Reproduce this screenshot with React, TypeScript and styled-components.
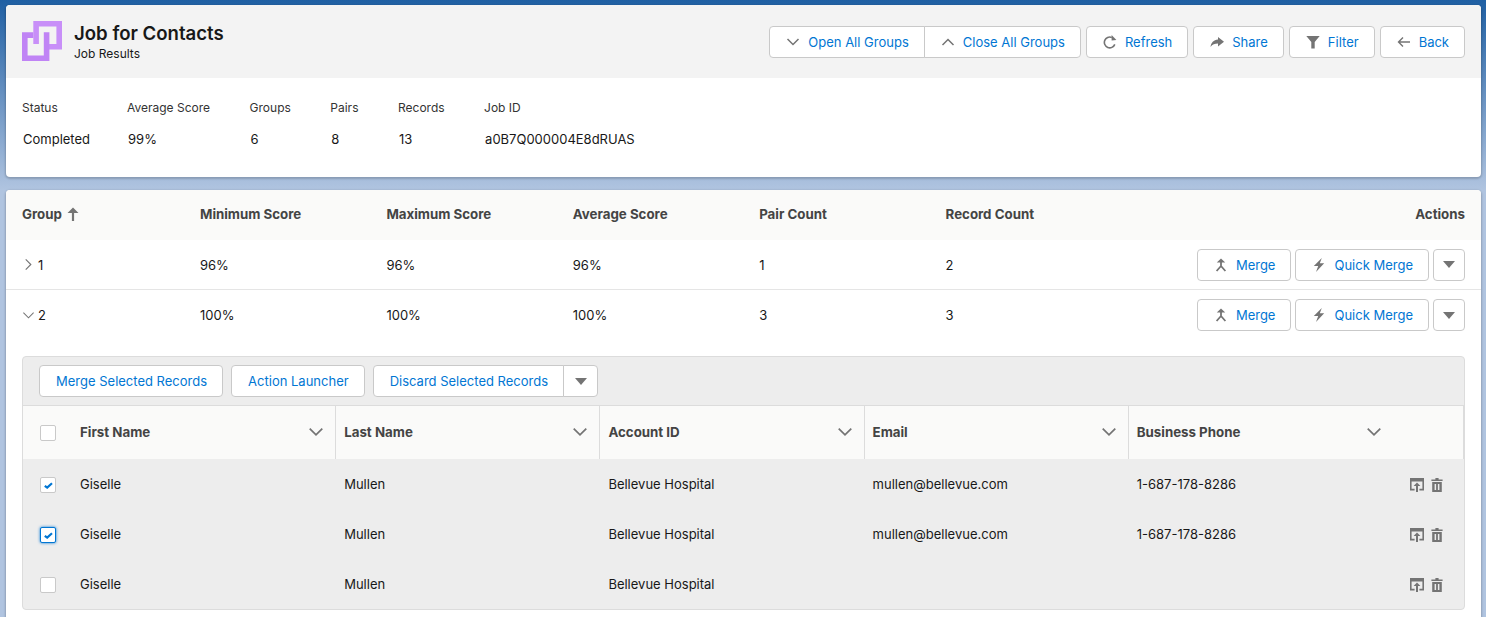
import React from 'react';
import styled, { createGlobalStyle } from 'styled-components';

const GlobalStyle = createGlobalStyle`
  html, body {
    margin: 0;
    height: 100%;
    overflow: hidden;
  }
  body {
    background: linear-gradient(#1f5fa3 0, #b0c4e0 190px);
    font-family: Inter, "Open Sans", sans-serif;
    font-size: 13px;
    color: #181818;
  }
  * {
    box-sizing: border-box;
  }
`;

const Page = styled.div`
  height: 617px;
  padding: 5px 5px 0 6px;
  display: flex;
  flex-direction: column;
  gap: 13px;
  overflow: hidden;
`;

const Card = styled.section`
  background: #fff;
  border-radius: 4px;
  box-shadow: 0 1px 2px 1px rgba(0, 0, 0, 0.18);
  overflow: hidden;
`;

const ResultsCard = styled(Card)`
  flex: 1;
  border-radius: 4px 4px 0 0;
`;

const Header = styled.header`
  height: 73px;
  background: #f3f3f3;
  padding: 16px;
  display: flex;
  align-items: flex-start;
  justify-content: space-between;
`;

const TitleBlock = styled.div`
  display: flex;
  gap: 12px;
`;

const Titles = styled.div`
  display: flex;
  flex-direction: column;
  gap: 1px;
  padding-top: 1px;
`;

const Title = styled.h1`
  margin: 0;
  font-size: 18.6px;
  line-height: 23px;
  font-weight: 600;
`;

const Subtitle = styled.div`
  font-size: 12px;
  line-height: 16px;
`;

const Actions = styled.div`
  display: flex;
  gap: 5px;
  margin-top: 5px;
`;

const Button = styled.button`
  height: 32px;
  padding: 0 15px 0 16px;
  display: inline-flex;
  align-items: center;
  justify-content: center;
  gap: 8px;
  background: #fff;
  border: 1px solid #c9c9c9;
  border-radius: 4px;
  color: #0176d3;
  font-family: inherit;
  font-size: 13px;
  white-space: nowrap;
`;

const ButtonGroup = styled.div`
  display: flex;

  ${Button} {
    border-radius: 0;
    margin-left: -1px;
  }
  ${Button}:first-child {
    border-radius: 4px 0 0 4px;
    margin-left: 0;
  }
  ${Button}:last-child {
    border-radius: 0 4px 4px 0;
  }
`;

const MenuButton = styled(Button)`
  width: 32px;
  padding: 0;
`;

const GroupMenuButton = styled(MenuButton)`
  width: 35px;
`;

const Summary = styled.div`
  height: 99px;
  padding: 22px 16px 0;
  display: flex;
  gap: 39.5px;
`;

const SummaryItem = styled.div`
  display: flex;
  flex-direction: column;
  gap: 15px;

  &:first-child {
    margin-right: -2.5px;
  }
`;

const SummaryLabel = styled.div`
  font-size: 12px;
  line-height: 16px;
  color: #333;
`;

const SummaryValue = styled.div`
  padding-left: 1px;
  line-height: 16px;
`;

const GroupGrid = styled.div`
  display: grid;
  grid-template-columns: 178px repeat(5, 186.4px) 1fr;
  align-items: center;
  padding: 0 16px;
  height: 50px;
`;

const GroupHead = styled(GroupGrid)`
  background: #fafaf9;
  padding-bottom: 2px;
  font-size: 13.3px;
  font-weight: 700;
  color: #444;
`;

const GroupRow = styled(GroupGrid)<{ $divider?: boolean }>`
  border-bottom: ${(p) => (p.$divider ? '1px solid #e5e5e5' : 'none')};
`;

const GroupName = styled.div`
  display: flex;
  align-items: center;
  gap: 3px;
`;

const SortName = styled(GroupName)`
  gap: 5px;
`;

const RowActions = styled.div`
  display: flex;
  justify-content: flex-end;
  gap: 4px;
`;

const RightCell = styled.div`
  text-align: right;
`;

const Nested = styled.div`
  margin: 16px 16px 0;
  height: 254px;
  background: #ededed;
  border: 1px solid #dcdcdc;
  border-radius: 4px;
  overflow: hidden;
`;

const Toolbar = styled.div`
  height: 49px;
  padding: 8px 16px;
  display: flex;
  gap: 8px;
  border-bottom: 1px solid #dcdcdc;
`;

const RecordGrid = styled.div`
  display: grid;
  grid-template-columns: 49px repeat(5, 264.2px) 1fr;
  align-items: center;
`;

const RecordHead = styled(RecordGrid)`
  height: 53px;
  background: #fafaf9;
  border-right: 1px solid #dcdcdc;
  font-size: 13.3px;
  font-weight: 700;
  color: #444;
`;

const HeadCell = styled.div<{ $divider?: boolean }>`
  height: 100%;
  padding: 0 11px 2px 8px;
  display: flex;
  align-items: center;
  justify-content: space-between;
  border-right: ${(p) => (p.$divider ? '1px solid #dcdcdc' : 'none')};
`;

const RecordRow = styled(RecordGrid)`
  height: 50px;
`;

const Cell = styled.div`
  padding: 0 8px;
  white-space: nowrap;
`;

const CheckCell = styled.div`
  display: flex;
  padding-left: 17px;
`;

const RowCheckCell = styled(CheckCell)`
  padding-top: 2px;
`;

const Checkbox = styled.span<{ $focus?: boolean }>`
  width: 16px;
  height: 16px;
  display: flex;
  align-items: center;
  justify-content: center;
  background: #fff;
  border: 1px solid ${(p) => (p.$focus ? '#0176d3' : '#c9c9c9')};
  border-radius: 2px;
  box-shadow: ${(p) => (p.$focus ? '0 0 3px #0176d3' : 'none')};
`;

const RowIcons = styled.div`
  display: flex;
  justify-content: flex-end;
  align-items: center;
  gap: 7px;
  padding: 2px 21px 0 0;
`;

const Svg = styled.svg`
  display: block;
  flex: none;
`;

const GREY = '#747474';

const ChevronDown = ({ size = 14, sw = 1.5 }: { size?: number; sw?: number }) => (
  <Svg width={size} height={size} viewBox="0 0 14 14" fill="none" stroke={GREY} strokeWidth={sw}>
    <path d="M1.5 4l5.5 5.5L12.5 4" />
  </Svg>
);

const ChevronUp = () => (
  <Svg width={14} height={14} viewBox="0 0 14 14" fill="none" stroke={GREY} strokeWidth={1.5}>
    <path d="M1.5 10L7 4.5 12.5 10" />
  </Svg>
);

const ChevronRight = () => (
  <Svg width={13} height={13} viewBox="0 0 14 14" fill="none" stroke={GREY} strokeWidth={1.2}>
    <path d="M4 1.5L9.5 7 4 12.5" />
  </Svg>
);

const RefreshIcon = () => (
  <Svg width={14} height={14} viewBox="0 0 14 14" fill="none" stroke={GREY} strokeWidth={1.6}>
    <path d="M11.8 9.4A5.4 5.4 0 1 1 8.8 2.4" />
    <path d="M8.6 0v5.4l4.8-.4z" fill={GREY} stroke="none" />
  </Svg>
);

const ShareIcon = () => (
  <Svg width={14} height={14} viewBox="0 0 14 14" fill={GREY}>
    <path d="M8 2l6 4.7L8 11.4V8.6C4.8 8.6 2.4 9.6.5 12 1 8 3.6 5 8 4.6z" />
  </Svg>
);

const FilterIcon = () => (
  <Svg width={14} height={14} viewBox="0 0 14 14" fill={GREY}>
    <path d="M.3 1h13.4L8.7 7v6.4H5.3V7z" />
  </Svg>
);

const BackIcon = () => (
  <Svg width={14} height={14} viewBox="0 0 14 14" fill="none" stroke={GREY} strokeWidth={1.4}>
    <path d="M13 7H1.5M6 2.5L1.5 7 6 11.5" />
  </Svg>
);

const MergeIcon = () => (
  <Svg width={14} height={14} viewBox="0 0 14 14" fill="none" stroke={GREY} strokeWidth={1.8}>
    <path d="M7 3v5M2.6 13L7 8l4.4 5" />
    <path d="M2.8 4.6L7 .6l4.2 4z" fill={GREY} stroke="none" />
  </Svg>
);

const BoltIcon = () => (
  <Svg width={14} height={14} viewBox="0 0 14 14" fill={GREY}>
    <path d="M9.8 0L1.8 8h4.4L4 14l8.2-8.8H7.8z" />
  </Svg>
);

const CaretDown = () => (
  <Svg width={12} height={7} viewBox="0 0 12 7" fill={GREY}>
    <path d="M0 0h12L6 7z" />
  </Svg>
);

const SortUp = () => (
  <Svg width={12} height={14} viewBox="0 0 12 14" fill={GREY}>
    <path d="M6 .5L11.5 6H7.1v8H4.9V6H.5z" />
  </Svg>
);

const CheckMark = () => (
  <Svg width={9} height={7} viewBox="0 0 9 7" fill="none" stroke="#0176d3" strokeWidth={2.2}>
    <path d="M.8 3.8L3.2 5.6 8 1.2" />
  </Svg>
);

const OpenRecordIcon = () => (
  <Svg width={14} height={14} viewBox="0 0 14 14" fill={GREY}>
    <path d="M0 0h14v12.4H9.4v-1.6h3V3.4H1.6v7.4h3v1.6H0z" />
    <path d="M7 4.4l3.4 3.6H8v6H6V8H3.6z" />
  </Svg>
);

const TrashIcon = () => (
  <Svg width={12} height={14} viewBox="0 0 12 14" fill={GREY}>
    <path d="M4.4 0h3.2v1.4h4V3H.4V1.4h4zM1.2 4h9.6v10H1.2zM3.6 6v6h1.5V6zM6.9 6v6h1.5V6z" />
  </Svg>
);

const Logo = () => (
  <Svg width={40} height={40} viewBox="0 0 40 40" fill="none" strokeWidth={5.6}>
    <path d="M14.1 23V2.8h23.1v23H26" stroke="#c88ff8" />
    <path d="M11.3 14.1H2.8v23.1h21.8V11.3" stroke="#c084f5" />
  </Svg>
);

const summary = [
  ['Status', 'Completed'],
  ['Average Score', '99%'],
  ['Groups', '6'],
  ['Pairs', '8'],
  ['Records', '13'],
  ['Job ID', 'a0B7Q000004E8dRUAS'],
];

const groups = [
  { id: '1', open: false, min: '96%', max: '96%', avg: '96%', pairs: '1', records: '2' },
  { id: '2', open: true, min: '100%', max: '100%', avg: '100%', pairs: '3', records: '3' },
];

const columns = ['First Name', 'Last Name', 'Account ID', 'Email', 'Business Phone'];

const records = [
  { checked: true, focus: false, email: 'mullen@bellevue.com', phone: '1-687-178-8286' },
  { checked: true, focus: true, email: 'mullen@bellevue.com', phone: '1-687-178-8286' },
  { checked: false, focus: false, email: '', phone: '' },
];

const App: React.FC = () => (
  <>
    <GlobalStyle />
    <Page>
      <Card>
        <Header>
          <TitleBlock>
            <Logo />
            <Titles>
              <Title>Job for Contacts</Title>
              <Subtitle>Job Results</Subtitle>
            </Titles>
          </TitleBlock>
          <Actions>
            <ButtonGroup>
              <Button><ChevronDown />Open All Groups</Button>
              <Button><ChevronUp />Close All Groups</Button>
            </ButtonGroup>
            <Button><RefreshIcon />Refresh</Button>
            <Button><ShareIcon />Share</Button>
            <Button><FilterIcon />Filter</Button>
            <Button><BackIcon />Back</Button>
          </Actions>
        </Header>
        <Summary>
          {summary.map(([label, value]) => (
            <SummaryItem key={label}>
              <SummaryLabel>{label}</SummaryLabel>
              <SummaryValue>{value}</SummaryValue>
            </SummaryItem>
          ))}
        </Summary>
      </Card>

      <ResultsCard>
        <GroupHead>
          <SortName>Group<SortUp /></SortName>
          <div>Minimum Score</div>
          <div>Maximum Score</div>
          <div>Average Score</div>
          <div>Pair Count</div>
          <div>Record Count</div>
          <RightCell>Actions</RightCell>
        </GroupHead>
        {groups.map((g) => (
          <GroupRow key={g.id} $divider={!g.open}>
            <GroupName>
              {g.open ? <ChevronDown size={13} sw={1.1} /> : <ChevronRight />}
              {g.id}
            </GroupName>
            <div>{g.min}</div>
            <div>{g.max}</div>
            <div>{g.avg}</div>
            <div>{g.pairs}</div>
            <div>{g.records}</div>
            <RowActions>
              <Button><MergeIcon />Merge</Button>
              <Button><BoltIcon />Quick Merge</Button>
              <MenuButton><CaretDown /></MenuButton>
            </RowActions>
          </GroupRow>
        ))}
        <Nested>
          <Toolbar>
            <Button>Merge Selected Records</Button>
            <Button>Action Launcher</Button>
            <ButtonGroup>
              <Button>Discard Selected Records</Button>
              <GroupMenuButton><CaretDown /></GroupMenuButton>
            </ButtonGroup>
          </Toolbar>
          <RecordHead>
            <CheckCell><Checkbox /></CheckCell>
            {columns.map((c, i) => (
              <HeadCell key={c} $divider={i < columns.length - 1}>
                {c}
                <ChevronDown size={16} />
              </HeadCell>
            ))}
          </RecordHead>
          {records.map((r, i) => (
            <RecordRow key={i}>
              <RowCheckCell>
                <Checkbox $focus={r.focus}>{r.checked && <CheckMark />}</Checkbox>
              </RowCheckCell>
              <Cell>Giselle</Cell>
              <Cell>Mullen</Cell>
              <Cell>Bellevue Hospital</Cell>
              <Cell>{r.email}</Cell>
              <Cell>{r.phone}</Cell>
              <RowIcons>
                <OpenRecordIcon />
                <TrashIcon />
              </RowIcons>
            </RecordRow>
          ))}
        </Nested>
      </ResultsCard>
    </Page>
  </>
);

export default App;
